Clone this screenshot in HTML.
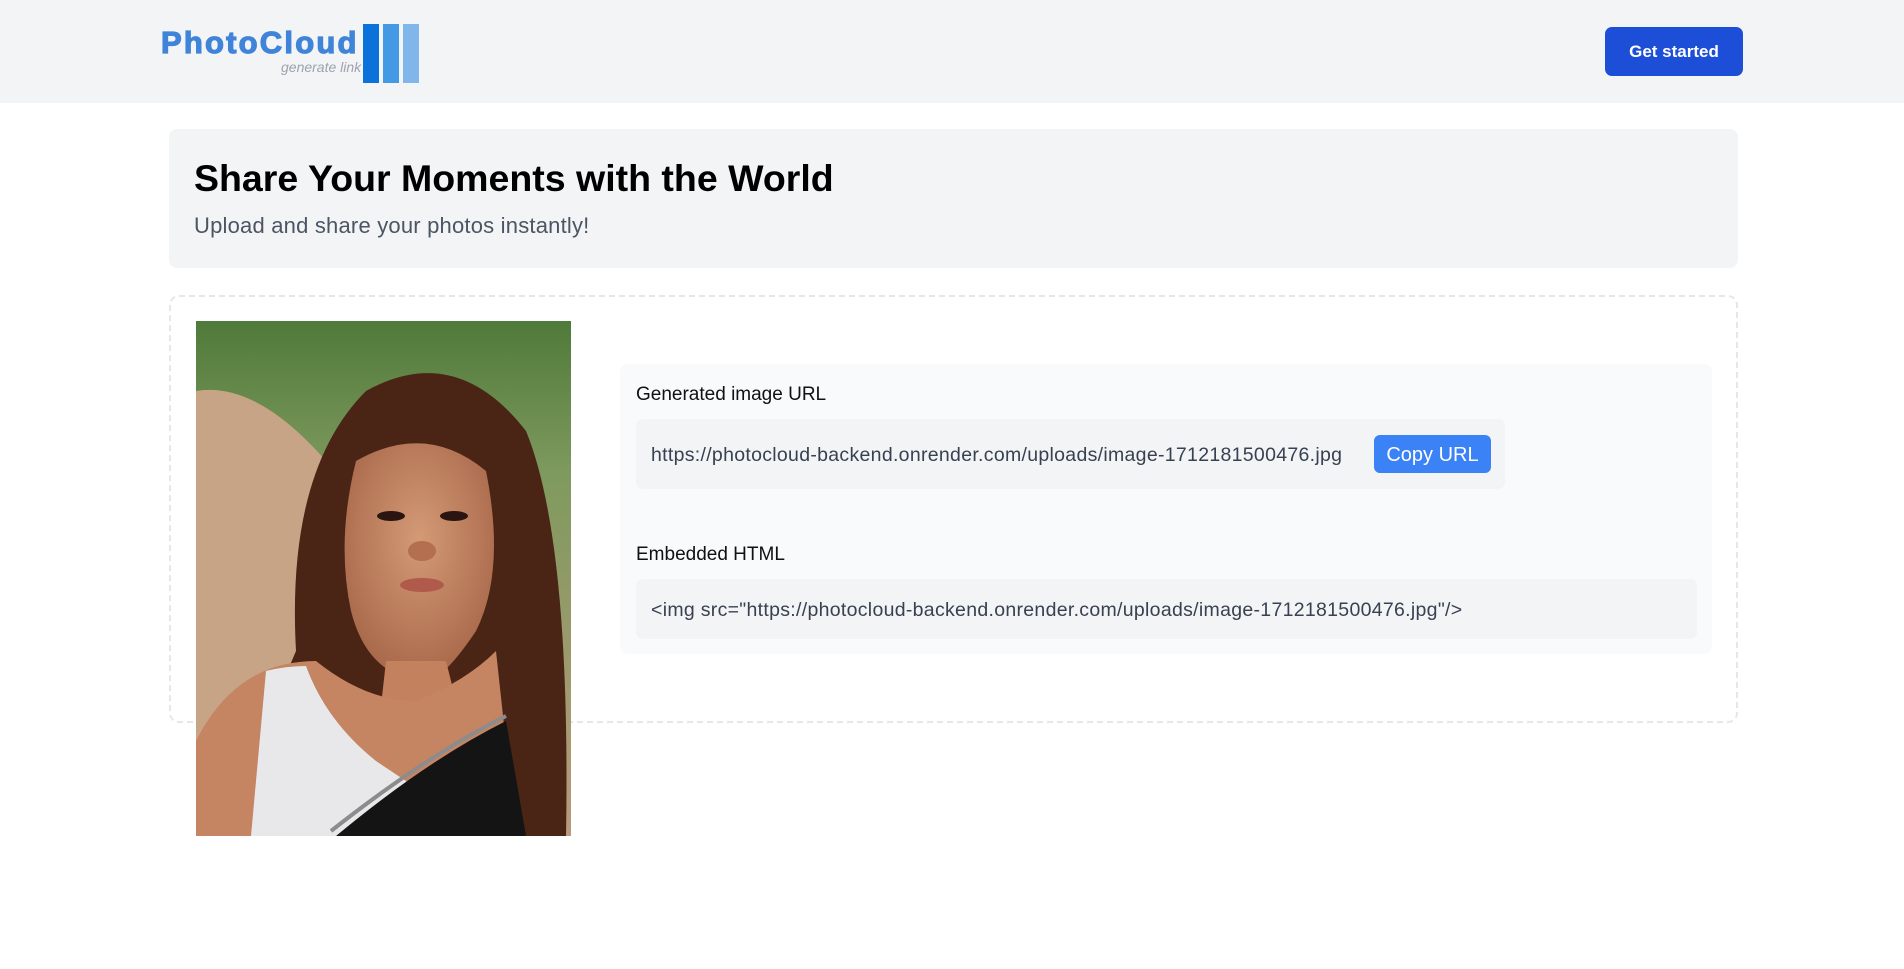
<!DOCTYPE html>
<html><head><meta charset="utf-8"><style>
*{box-sizing:border-box;margin:0;padding:0}
body{width:1904px;height:969px;background:#fff;font-family:"Liberation Sans",sans-serif;position:relative;overflow:hidden}
.hdr{position:absolute;left:0;top:0;width:1904px;height:103px;background:#f3f4f6}
.logo{position:absolute;left:161px;top:25px;font-weight:bold;font-size:31px;color:#3f84d8;letter-spacing:2.2px;-webkit-text-stroke:1.2px #3f84d8}
.sub{position:absolute;left:281px;top:59px;font-style:italic;font-size:14px;color:#9ca3af}
.bar{position:absolute;top:24px;height:59px;width:16px}
.btn{position:absolute;left:1605px;top:27px;width:138px;height:49px;background:#1d4ed8;border-radius:7px;color:#fff;font-weight:bold;font-size:17px;text-align:center;line-height:49px}
.hero{position:absolute;left:169px;top:129px;width:1569px;height:139px;background:#f3f4f6;border-radius:8px}
.hero h1{position:absolute;left:25px;top:28px;font-size:37.5px;font-weight:bold;color:#000}
.hero p{position:absolute;left:25px;top:84px;font-size:22px;color:#4b5563;letter-spacing:0.2px}
.dash{position:absolute;left:169px;top:295px;width:1569px;height:428px;border:2px dashed #e5e7eb;border-radius:10px}
.photo{position:absolute;left:196px;top:321px;width:375px;height:515px}
.panel{position:absolute;left:620px;top:364px;width:1092px;height:290px;background:#f9fafb;border-radius:8px}
.lbl{position:absolute;left:16px;font-size:19px;color:#111}
.box{position:absolute;left:16px;background:#f3f4f6;border-radius:7px;font-size:19.5px;color:#374151;letter-spacing:0.3px}
.copy{position:absolute;left:738px;top:16px;width:117px;height:38px;background:#3b82f6;border-radius:6px;color:#fff;font-size:20px;text-align:center;line-height:40px;letter-spacing:0}
</style></head><body>
<div class="hdr">
 <div class="logo">PhotoCloud</div>
 <div class="sub">generate link</div>
 <div class="bar" style="left:363px;background:#0b72d9"></div>
 <div class="bar" style="left:383px;background:#4399e4"></div>
 <div class="bar" style="left:403px;background:#80b6ea"></div>
 <div class="btn">Get started</div>
</div>
<div class="hero"><h1>Share Your Moments with the World</h1><p>Upload and share your photos instantly!</p></div>
<div class="dash"></div>
<svg class="photo" viewBox="0 0 375 515" preserveAspectRatio="none">
 <defs>
  <linearGradient id="bg" x1="0" y1="0" x2="0" y2="1"><stop offset="0" stop-color="#4f7a3a"/><stop offset="0.3" stop-color="#7f9a5e"/><stop offset="1" stop-color="#b99a7c"/></linearGradient>
  <radialGradient id="sk" cx="0.5" cy="0.4" r="0.6"><stop offset="0" stop-color="#d49a76"/><stop offset="1" stop-color="#a8684a"/></radialGradient>
 </defs>
 <rect width="375" height="515" fill="url(#bg)"/>
 <path d="M0 70 Q60 60 130 140 L130 515 L0 515Z" fill="#c7a486"/>
 <path d="M100 330 Q90 150 170 70 Q260 20 330 110 Q375 220 370 515 L70 515 Q60 420 100 330Z" fill="#4a2414"/>
 <path d="M160 140 Q230 100 290 150 Q310 250 280 310 Q240 370 220 360 Q170 350 155 290 Q140 220 160 140Z" fill="url(#sk)"/>
 <path d="M190 340 L250 340 L270 420 L180 430Z" fill="#c4815e"/>
 <path d="M0 420 Q40 340 120 340 Q170 380 220 380 Q270 360 300 330 L320 515 L0 515Z" fill="#c58462"/>
 <path d="M55 515 L70 350 Q90 345 110 345 Q130 400 180 440 L240 480 L230 515Z" fill="#e8e8ea"/>
 <path d="M140 515 Q230 440 310 400 L330 515Z" fill="#141414"/>
 <path d="M135 510 Q230 435 310 395" stroke="#8c8c8c" stroke-width="4" fill="none"/>
 <ellipse cx="195" cy="195" rx="14" ry="5" fill="#2a1510"/><ellipse cx="258" cy="195" rx="14" ry="5" fill="#2a1510"/>
 <ellipse cx="226" cy="230" rx="14" ry="10" fill="#b46e50"/>
 <ellipse cx="226" cy="264" rx="22" ry="7" fill="#b05a4c"/>
</svg>
<div class="panel">
 <div class="lbl" style="top:20px">Generated image URL</div>
 <div class="box" style="top:55px;width:869px;height:70px"><span style="position:absolute;left:15px;top:25px">https://photocloud-backend.onrender.com/uploads/image-1712181500476.jpg</span><div class="copy">Copy URL</div></div>
 <div class="lbl" style="top:180px">Embedded HTML</div>
 <div class="box" style="top:215px;width:1061px;height:60px"><span style="position:absolute;left:15px;top:20px">&lt;img src="https://photocloud-backend.onrender.com/uploads/image-1712181500476.jpg"/&gt;</span></div>
</div>
</body></html>
